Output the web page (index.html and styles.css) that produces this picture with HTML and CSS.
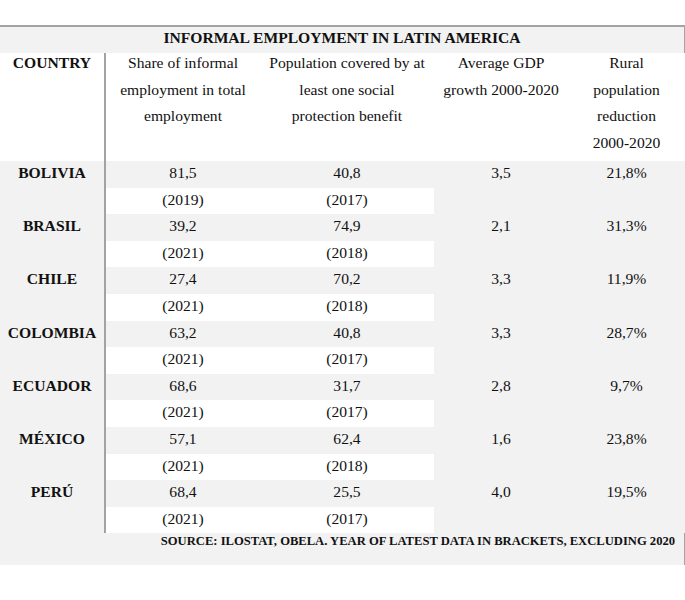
FILE: index.html
```html
<!DOCTYPE html>
<html lang="en">
<head>
<meta charset="utf-8">
<title>Informal employment in Latin America</title>
<link rel="stylesheet" href="styles.css">
</head>
<body>
<div class="page">
  <table class="tbl">
    <colgroup>
      <col class="c-country">
      <col class="c-share">
      <col class="c-pop">
      <col class="c-gdp">
      <col class="c-rural">
    </colgroup>
    <tr class="title-row">
      <th colspan="5">INFORMAL EMPLOYMENT IN LATIN AMERICA</th>
    </tr>
    <tr class="head-row">
      <th class="country"><div class="hd">COUNTRY</div></th>
      <td><div class="hd">Share of informal<br>employment in total<br>employment</div></td>
      <td><div class="hd">Population covered by at<br>least one social<br>protection benefit</div></td>
      <td><div class="hd">Average GDP<br>growth 2000-2020</div></td>
      <td><div class="hd">Rural<br>population<br>reduction<br>2000-2020</div></td>
    </tr>
    <tr class="val"><th class="country" rowspan="2">BOLIVIA</th><td>81,5</td><td>40,8</td><td class="span" rowspan="2">3,5</td><td class="span" rowspan="2">21,8%</td></tr>
    <tr class="yr"><td>(2019)</td><td>(2017)</td></tr>
    <tr class="val"><th class="country" rowspan="2">BRASIL</th><td>39,2</td><td>74,9</td><td class="span" rowspan="2">2,1</td><td class="span" rowspan="2">31,3%</td></tr>
    <tr class="yr"><td>(2021)</td><td>(2018)</td></tr>
    <tr class="val"><th class="country" rowspan="2">CHILE</th><td>27,4</td><td>70,2</td><td class="span" rowspan="2">3,3</td><td class="span" rowspan="2">11,9%</td></tr>
    <tr class="yr"><td>(2021)</td><td>(2018)</td></tr>
    <tr class="val"><th class="country" rowspan="2">COLOMBIA</th><td>63,2</td><td>40,8</td><td class="span" rowspan="2">3,3</td><td class="span" rowspan="2">28,7%</td></tr>
    <tr class="yr"><td>(2021)</td><td>(2017)</td></tr>
    <tr class="val"><th class="country" rowspan="2">ECUADOR</th><td>68,6</td><td>31,7</td><td class="span" rowspan="2">2,8</td><td class="span" rowspan="2">9,7%</td></tr>
    <tr class="yr"><td>(2021)</td><td>(2017)</td></tr>
    <tr class="val"><th class="country" rowspan="2">MÉXICO</th><td>57,1</td><td>62,4</td><td class="span" rowspan="2">1,6</td><td class="span" rowspan="2">23,8%</td></tr>
    <tr class="yr"><td>(2021)</td><td>(2018)</td></tr>
    <tr class="val"><th class="country" rowspan="2">PERÚ</th><td>68,4</td><td>25,5</td><td class="span" rowspan="2">4,0</td><td class="span" rowspan="2">19,5%</td></tr>
    <tr class="yr"><td>(2021)</td><td>(2017)</td></tr>
    <tr class="src-row">
      <td colspan="5">SOURCE: ILOSTAT, OBELA. YEAR OF LATEST DATA IN BRACKETS, EXCLUDING 2020</td>
    </tr>
  </table>
</div>
</body>
</html>
```

FILE: styles.css
```css
html, body {
  margin: 0;
  padding: 0;
  background: #ffffff;
}

.page {
  padding-top: 25px;
  width: 685px;
}

.tbl {
  width: 685px;
  table-layout: fixed;
  border-collapse: collapse;
  font-family: "Liberation Serif", "Times New Roman", serif;
  font-size: 15.6px;
  color: #111111;
  border-top: 2px solid #a3a3a3;
}

.c-country { width: 105px; }
.c-share { width: 155px; }
.c-pop { width: 174px; }
.c-gdp { width: 134px; }
.c-rural { width: 117px; }

.tbl th,
.tbl td {
  padding: 0;
  text-align: center;
  font-weight: normal;
}

.tbl th.country,
.title-row th,
.src-row td {
  font-weight: bold;
}

.title-row th {
  height: 26px;
  line-height: 21px;
  padding-bottom: 5px;
  box-sizing: border-box;
  background: #f2f2f2;
  border-right: 2px solid #a3a3a3;
}

.head-row th,
.head-row td {
  height: 108px;
  vertical-align: top;
  background: #ffffff;
  line-height: 26.6px;
}

.hd {
  margin-top: -3px;
}

.tbl th.country {
  border-right: 2px solid #a3a3a3;
  background: #f2f2f2;
  vertical-align: top;
}

.head-row th.country {
  background: #ffffff;
}

.val td,
.yr td,
.val th {
  height: 26.6px;
  line-height: 23.6px;
  padding-bottom: 3px;
  box-sizing: border-box;
}

.val td {
  background: #f2f2f2;
}

.yr td {
  background: #ffffff;
}

.tbl td.span {
  background: #f2f2f2;
  vertical-align: top;
}

.src-row td {
  height: 32px;
  background: #f2f2f2;
  font-size: 12.6px;
  line-height: 16px;
  padding: 0 9px 16px 0;
  box-sizing: border-box;
  text-align: right;
  vertical-align: top;
  border-right: 2px solid #a3a3a3;
}
```
